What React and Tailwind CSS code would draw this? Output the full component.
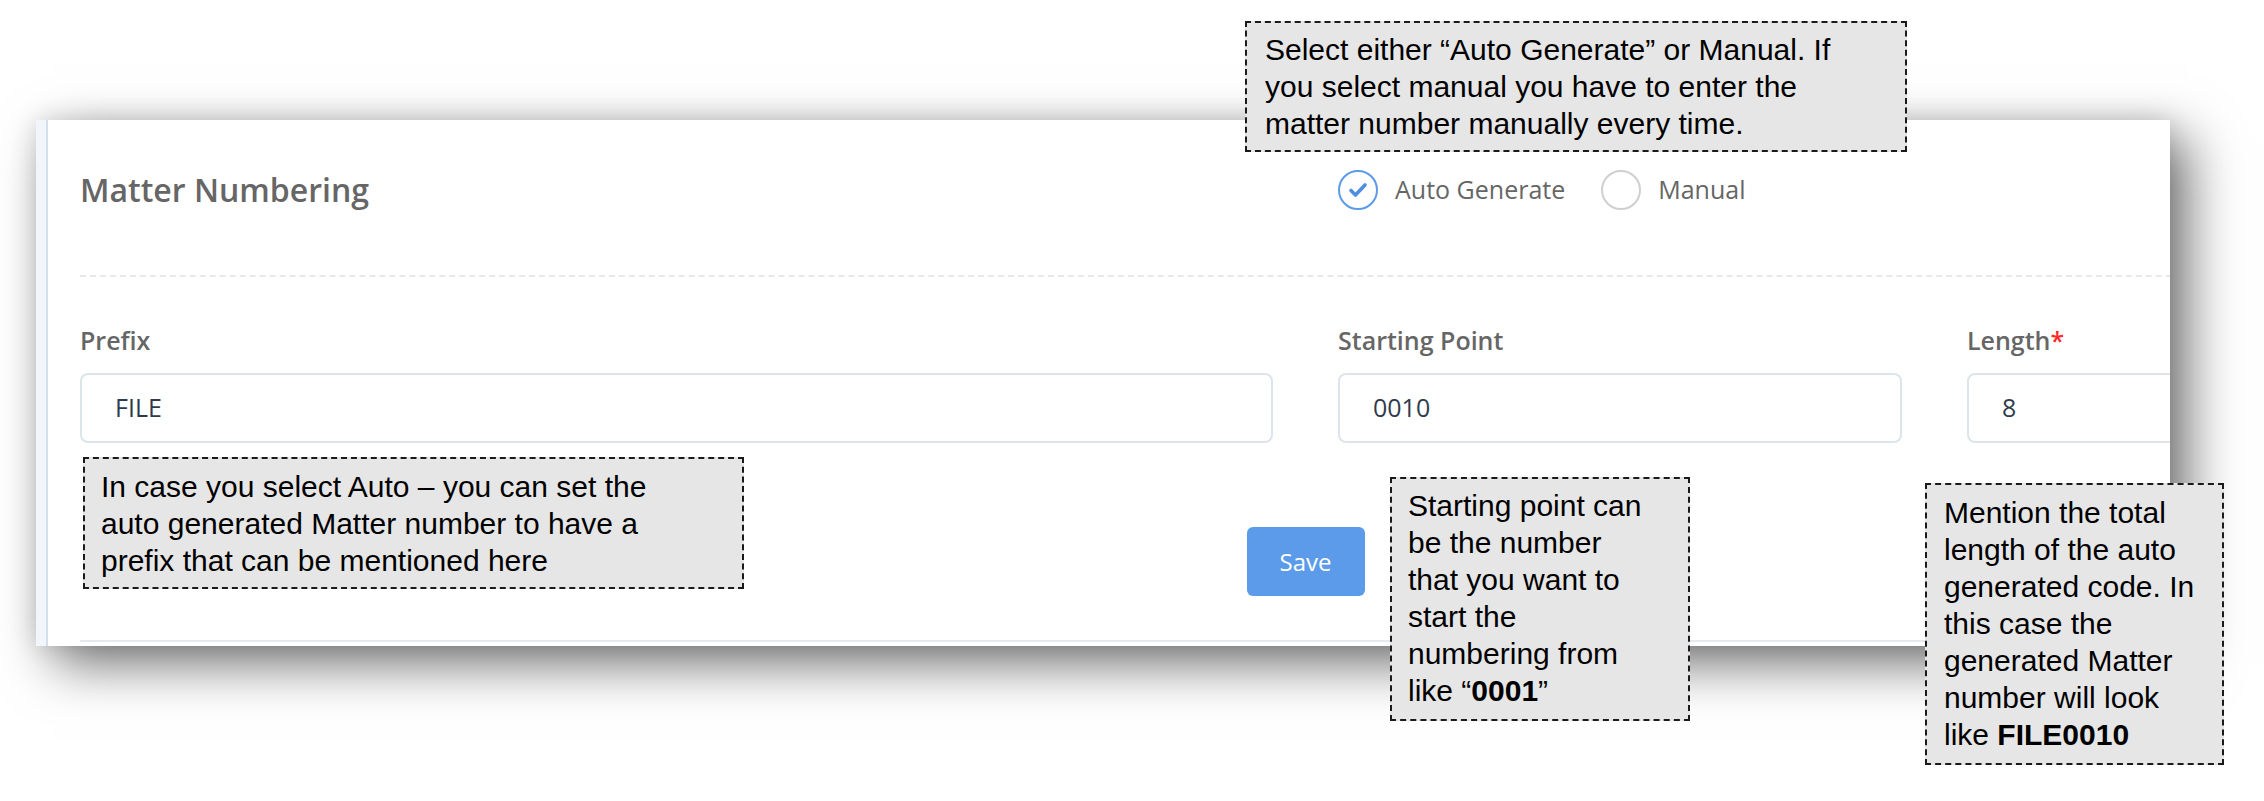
import React from "react";

const ui = { fontFamily: '"Open Sans", "Noto Sans", sans-serif' };
const note = { fontFamily: '"Liberation Sans", Arial, sans-serif' };

const Note = ({ className, children }) => (
  <div
    style={note}
    className={`absolute border-2 border-dashed border-[#1a1a1a] bg-[#e6e6e6] text-[30px] leading-[37px] text-black whitespace-nowrap ${className}`}
  >
    {children}
  </div>
);

const Radio = ({ checked, label }) => (
  <label className="flex items-center gap-[17px] cursor-pointer">
    <span
      className={`flex h-[40px] w-[40px] items-center justify-center rounded-full border-2 ${
        checked ? "border-[#5b9be8]" : "border-[#cfcfcf]"
      }`}
    >
      {checked && (
        <svg width="24" height="24" viewBox="0 0 24 24">
          <path
            d="M5 12.5l4.5 4.5L19 7"
            fill="none"
            stroke="#4f8fe0"
            strokeWidth="3.6"
            strokeLinecap="round"
            strokeLinejoin="round"
          />
        </svg>
      )}
    </span>
    <span className="text-[25px] text-[#666]">{label}</span>
  </label>
);

const Field = ({ label, value, required }) => (
  <div>
    <div className="mb-[17px] text-[25px] font-semibold leading-[32px] text-[#666]">
      {label}
      {required && <span className="text-[#ff2a2a]">*</span>}
    </div>
    <div className="flex h-[70px] items-center rounded-[8px] border-2 border-[#dce6ea] bg-white pl-[33px] text-[25px] text-[#2f3b4c]">
      {value}
    </div>
  </div>
);

export default function App() {
  return (
    <div className="relative h-[801px] w-[2264px] overflow-hidden bg-white" style={ui}>
      {/* card */}
      <div className="ml-[36px] mt-[120px] flex h-[526px] w-[2134px] bg-white shadow-[18px_18px_50px_rgba(0,0,0,0.55),0_0_24px_rgba(0,0,0,0.12)]">
        <div className="w-[10px] shrink-0 bg-[#f2f5f9]" />
        <div className="w-[2px] shrink-0 bg-[#d3dfea]" />
        <div className="flex-1 overflow-hidden pl-[32px]">
          <div className="w-[2451px]">
            {/* header */}
            <div className="grid h-[157px] grid-cols-4 items-center gap-x-[65px] border-b-2 border-dashed border-[#e8e8e8] pb-[15px]">
              <h2 className="col-span-2 text-[32px] font-semibold text-[#666]">Matter Numbering</h2>
              <div className="flex items-center gap-[36px]">
                <Radio checked label="Auto Generate" />
                <Radio label="Manual" />
              </div>
            </div>

            {/* fields */}
            <div className="mt-[47px] grid grid-cols-4 gap-x-[65px]">
              <div className="col-span-2">
                <Field label="Prefix" value="FILE" />
              </div>
              <Field label="Starting Point" value="0010" />
              <Field label="Length" value="8" required />
            </div>

            <div className="mt-[84px] flex justify-center">
              <button className="h-[69px] w-[118px] rounded-[6px] bg-[#5b9bea] text-[24px] text-white">
                Save
              </button>
            </div>

            <div className="mt-[44px] border-t-2 border-[#e3e9ee]" />
          </div>
        </div>
      </div>

      {/* annotations */}
      <Note className="left-[1245px] top-[21px] h-[131px] w-[662px] pl-[18px] pt-[8px]">
        Select either “Auto Generate” or Manual. If
        <br />
        you select manual you have to enter the
        <br />
        matter number manually every time.
      </Note>

      <Note className="left-[83px] top-[457px] h-[132px] w-[661px] pl-[16px] pt-[9px]">
        In case you select Auto – you can set the
        <br />
        auto generated Matter number to have a
        <br />
        prefix that can be mentioned here
      </Note>

      <Note className="left-[1390px] top-[477px] h-[244px] w-[300px] pl-[16px] pt-[8px]">
        Starting point can
        <br />
        be the number
        <br />
        that you want to
        <br />
        start the
        <br />
        numbering from
        <br />
        like “<b>0001</b>”
      </Note>

      <Note className="left-[1925px] top-[483px] h-[282px] w-[299px] pl-[17px] pt-[9px]">
        Mention the total
        <br />
        length of the auto
        <br />
        generated code. In
        <br />
        this case the
        <br />
        generated Matter
        <br />
        number will look
        <br />
        like <b>FILE0010</b>
      </Note>
    </div>
  );
}
